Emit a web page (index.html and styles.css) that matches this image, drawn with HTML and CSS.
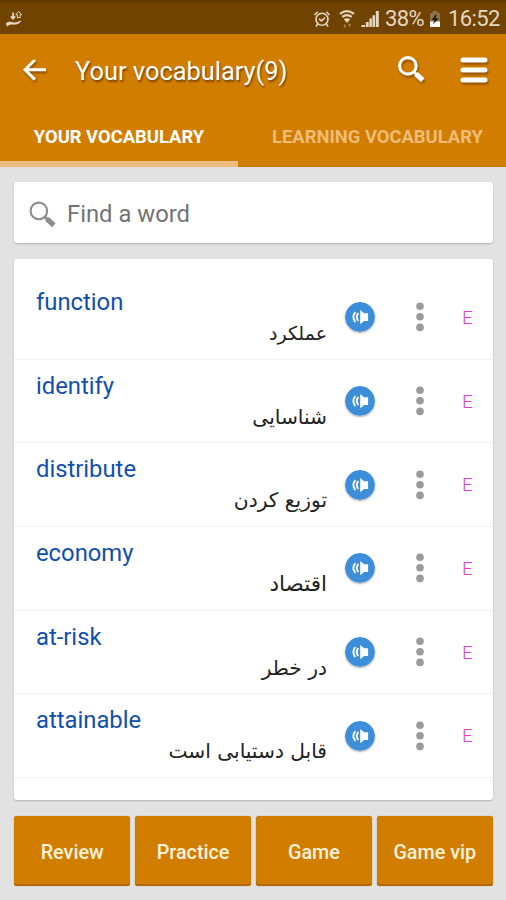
FILE: index.html
```html
<!DOCTYPE html>
<html lang="en">
<head>
<meta charset="utf-8">
<title>Your vocabulary</title>
<link rel="stylesheet" href="styles.css">
</head>
<body>
<svg class="defs" width="0" height="0" aria-hidden="true">
  <symbol id="magnifier" viewBox="0 0 28 28">
    <circle cx="10.5" cy="10.5" r="8" fill="none" stroke="currentColor" stroke-width="var(--ring)"/>
    <path d="M15.8 15.8l4 4" stroke="currentColor" stroke-width="2.8"/>
    <path d="M18.3 18.3l6.6 6.1" stroke="currentColor" stroke-width="5"/>
  </symbol>
  <symbol id="speaker" viewBox="0 0 30 30">
    <circle cx="15" cy="15" r="15" fill="#3c8edb"/>
    <path d="M15.2 8l4 3.2h3.9v7.9h-3.9l-4 3.2z" fill="#fff"/>
    <path d="M13.3 11.2c-1.9 2.4-1.9 5.4 0 7.8M10.4 10.2c-2.7 2.8-2.7 7 0 9.8" fill="none" stroke="#fff" stroke-width="1.9"/>
  </symbol>
  <symbol id="dots" viewBox="0 0 8 30">
    <g fill="#9b9b9b"><circle cx="4" cy="4.2" r="3.8"/><circle cx="4" cy="14.8" r="3.8"/><circle cx="4" cy="25.4" r="3.8"/></g>
  </symbol>
</svg>
<header class="top">
  <div class="status">
    <svg class="share" viewBox="0 0 18 18"><path d="M1 13.2c3-2.2 5-1.3 8-.6 3 .2 5-1.5 7.3-2.1-1.3 3.5-5.3 4.3-8.5 4.1-2 0-3.8.2-6 2z" fill="currentColor"/><path d="M8 2.5v6M5.9 6.4L8 8.8l2.1-2.4" fill="none" stroke="currentColor" stroke-width="1.7"/><path d="M12.3 7.5V4.7h-1.6l3-3.2 3 3.2h-1.6v2.8z" fill="none" stroke="currentColor"/></svg>
    <svg class="alarm" viewBox="0 0 18 18"><g fill="none" stroke="currentColor" stroke-width="1.6"><circle cx="9" cy="9.2" r="6"/><path d="M6 8.9l2.4 2 3.7-3.4M1.5 5l3.2-3.2M16.5 5l-3.2-3.2M4.7 13.6L3 16.6M13.3 13.6L15 16.6"/></g></svg>
    <svg class="wifi" viewBox="0 0 18 18"><path d="M2 3.8c4.4-3.3 9.6-3.3 14 0M4.2 6.9c2.9-2.2 6.7-2.2 9.6 0" fill="none" stroke="currentColor" stroke-width="2.2"/><path d="M5.8 9.3c2.1-1.5 4.3-1.5 6.4 0L9 13z" fill="currentColor"/><path d="M5.2 17.2l1.6-3.4 1.6 3.4zM10 13.8h3.2l-1.6 3.4z" fill="currentColor" opacity=".45"/></svg>
    <svg class="signal" viewBox="0 0 18 18"><path d="M.5 17v-2H4v2zM4.8 17v-5h2.9v5zM8.4 17V8.5h2.5V17zM11.5 17V5.2H14V17zM14.8 17V1H17.8v16z" fill="currentColor"/></svg>
    <span class="percent">38%</span>
    <svg class="battery" viewBox="0 0 12 18"><path d="M3.5 1h5v2H11v14H1V3h2.5z" fill="#8b744d"/><path d="M1 11.5h10V17H1z" fill="#fff"/><path d="M7.5 3.5L2.5 10h3L4 14.5l5.6-6.2H6.7z" fill="#24170a"/></svg>
    <span class="clock">16:52</span>
  </div>
  <div class="bar">
    <svg class="back" viewBox="0 0 24 24"><path d="M12.4 2L2.5 11.8l9.9 9.8M2.5 11.8H23.5" fill="none" stroke="#fff" stroke-width="2.9"/></svg>
    <h1><span>Your vocabulary(9)</span></h1>
    <svg class="find"><use href="#magnifier"/></svg>
    <svg class="menu" viewBox="0 0 30 28"><path d="M4 4h22M4 14h22M4 24h22" stroke="#fff" stroke-width="5" stroke-linecap="round"/></svg>
  </div>
  <nav class="tabs">
    <a class="tab active"><span>YOUR VOCABULARY</span></a>
    <a class="tab"><span>LEARNING VOCABULARY</span></a>
  </nav>
</header>
<main>
  <label class="search card"><svg><use href="#magnifier"/></svg><span>Find a word</span></label>
  <section class="list card">
    <article class="row"><div class="text"><b>function</b><p class="tight" lang="fa" dir="rtl">عملکرد</p></div><svg class="speaker"><use href="#speaker"/></svg><svg class="dots"><use href="#dots"/></svg><i>E</i></article>
    <article class="row"><div class="text"><b>identify</b><p lang="fa" dir="rtl">شناسایی</p></div><svg class="speaker"><use href="#speaker"/></svg><svg class="dots"><use href="#dots"/></svg><i>E</i></article>
    <article class="row"><div class="text"><b>distribute</b><p lang="fa" dir="rtl">توزیع کردن</p></div><svg class="speaker"><use href="#speaker"/></svg><svg class="dots"><use href="#dots"/></svg><i>E</i></article>
    <article class="row"><div class="text"><b>economy</b><p class="wide" lang="fa" dir="rtl">اقتصاد</p></div><svg class="speaker"><use href="#speaker"/></svg><svg class="dots"><use href="#dots"/></svg><i>E</i></article>
    <article class="row"><div class="text"><b>at-risk</b><p lang="fa" dir="rtl">در خطر</p></div><svg class="speaker"><use href="#speaker"/></svg><svg class="dots"><use href="#dots"/></svg><i>E</i></article>
    <article class="row"><div class="text"><b>attainable</b><p lang="fa" dir="rtl">قابل دستیابی است</p></div><svg class="speaker"><use href="#speaker"/></svg><svg class="dots"><use href="#dots"/></svg><i>E</i></article>
  </section>
  <div class="actions"><button>Review</button><button>Practice</button><button>Game</button><button>Game vip</button></div>
</main>
</body>
</html>
```
FILE: styles.css
```css
* { box-sizing: border-box; margin: 0; padding: 0; }
body { width: 506px; height: 900px; overflow: hidden; background: #e2e2e2; font-family: Roboto, "DejaVu Sans", sans-serif; }
svg { display: block; flex: none; }
.defs { position: absolute; }
.top { height: 167px; background: #d17d00; border-bottom: 1px solid #c57700; }
.status { height: 34px; display: flex; align-items: center; padding: 3px 6px 0 5px; background: linear-gradient(#5f3900, #704300 5px); color: #e6d7c3; font-size: 22px; }
.status svg { width: 18px; height: 18px; }
.status .share { margin-right: auto; }
.status .alarm { margin-right: 7px; }
.status .wifi { margin-right: 5px; }
.status .signal { margin-right: 6px; }
.status .battery { width: 12px; margin: 0 7px 0 4px; }
.status .percent { width: 40px; white-space: nowrap; letter-spacing: -.6px; }
.status .clock { width: 52px; white-space: nowrap; letter-spacing: -.6px; }
.bar { height: 70px; display: flex; align-items: center; padding: 1px 17px 0 22px; color: #fff; --ring: 3; }
.bar svg { filter: drop-shadow(1px 2px 1px rgba(70, 35, 0, .5)); }
.back { width: 25px; height: 24px; }
.bar h1 { margin-left: 28px; margin-right: auto; padding-top: 2px; font-size: 25.4px; font-weight: 400; line-height: 30px; text-shadow: 1px 2px 2px rgba(70, 35, 0, .65); }
.find { width: 29px; height: 29px; margin-right: 33px; }
.menu { width: 30px; height: 28px; }
.tabs { height: 63px; display: grid; grid-template-columns: 238px 1fr; }
.tab { display: flex; justify-content: center; align-items: center; padding-top: 2px; font-size: 18.4px; font-weight: 700; color: #efbc78; white-space: nowrap; }
.tab:last-child { padding-left: 11px; }
.tab.active { color: #fff; border-bottom: 6px solid #edbd80; padding-top: 8px; }
main { padding: 15px 13px 0 14px; }
.card { display: block; background: #fff; border-radius: 3px; box-shadow: 0 1px 2px rgba(0, 0, 0, .22); }
.search { height: 61px; display: flex; align-items: center; padding: 3px 0 0 14px; color: #8d8d8d; --ring: 2; }
.search svg { width: 29px; height: 29px; }
.search span { margin-left: 10px; color: #737373; font-size: 23.8px; }
.list { height: 541px; margin-top: 16px; padding-top: 17px; }
.row { height: 83.7px; display: flex; align-items: center; border-bottom: 1.5px solid #f1f1f1; padding-left: 22px; }
.text { width: 291px; height: 100%; padding-top: 10px; }
.text b { display: block; color: #114fae; font-weight: 400; font-size: 23.8px; line-height: 32px; }
.text p { color: #222; font-family: "DejaVu Sans", sans-serif; font-size: 20.2px; line-height: 30px; white-space: nowrap; }
.text .tight { font-size: 19px; }
.text .wide { font-size: 21.5px; }
.speaker { width: 30px; height: 30px; margin-left: 18px; border-radius: 50%; box-shadow: 0 1px 2px rgba(0, 0, 0, .35); }
.dots { width: 8px; height: 30px; margin-left: 40.5px; }
.row i { margin-left: 38.5px; color: #df3fd3; font: 300 19px Roboto, sans-serif; }
.actions { display: grid; grid-template-columns: repeat(4, 1fr); gap: 4.5px; margin-top: 16px; }
button { height: 70px; border: 0; border-radius: 3px; background: #d17d00; color: #fff1dc; font: 500 19.8px Roboto, sans-serif; padding-top: 3px; box-shadow: inset 0 -2px #b66800, 0 0 1px #b66800; white-space: nowrap; }
```
